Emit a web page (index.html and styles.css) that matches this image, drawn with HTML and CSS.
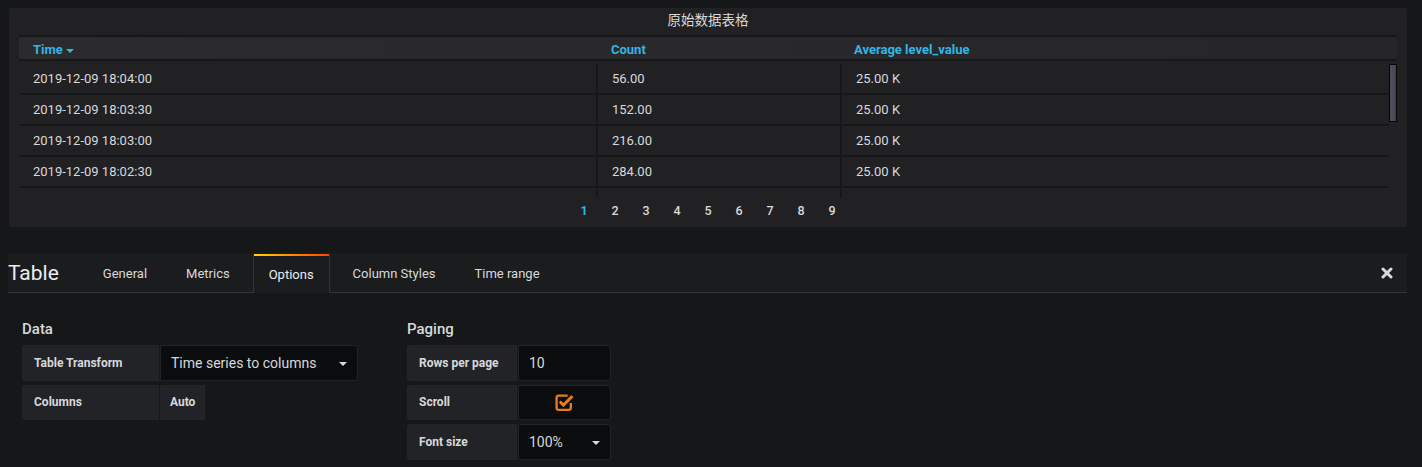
FILE: index.html
```html
<!DOCTYPE html>
<html lang="zh">
<head>
    <meta charset="UTF-8">
    <meta name="viewport" content="width=device-width, initial-scale=1.0">
    <title>Table - Options</title>
    <link rel="stylesheet" href="styles.css">
</head>
<body>

<!-- Bảng dữ liệu -->
<div class="panel">
    <div class="panel-title">原始数据表格</div>
    <table class="table-head">
        <colgroup>
            <col class="col-time-h">
            <col class="col-count-h">
            <col>
        </colgroup>
        <tr>
            <th>Time <span class="sort-caret"></span></th>
            <th>Count</th>
            <th>Average level_value</th>
        </tr>
    </table>
    <div class="table-scroll">
        <div class="rows">
            <table class="table-body">
                <colgroup>
                    <col class="col-time">
                    <col class="col-count">
                    <col>
                </colgroup>
                <tr><td>2019-12-09 18:04:00</td><td>56.00</td><td>25.00 K</td></tr>
                <tr><td>2019-12-09 18:03:30</td><td>152.00</td><td>25.00 K</td></tr>
                <tr><td>2019-12-09 18:03:00</td><td>216.00</td><td>25.00 K</td></tr>
                <tr><td>2019-12-09 18:02:30</td><td>284.00</td><td>25.00 K</td></tr>
                <tr class="filler"><td></td><td></td><td></td></tr>
            </table>
        </div>
        <div class="scrollbar"><div class="scrollbar-thumb"></div></div>
    </div>
    <ul class="pager">
        <li class="active">1</li>
        <li>2</li>
        <li>3</li>
        <li>4</li>
        <li>5</li>
        <li>6</li>
        <li>7</li>
        <li>8</li>
        <li>9</li>
    </ul>
</div>

<!-- Trình chỉnh sửa -->
<div class="editor">
    <div class="editor-tabs">
        <h3 class="editor-title">Table</h3>
        <ul class="tabs">
            <li class="tab">General</li>
            <li class="tab">Metrics</li>
            <li class="tab active">Options</li>
            <li class="tab">Column Styles</li>
            <li class="tab">Time range</li>
        </ul>
        <span class="close-btn">
            <svg width="12" height="12" viewBox="0 0 12 12">
                <path d="M2 2 L10 10 M10 2 L2 10" stroke="#d8d9da" stroke-width="3" stroke-linecap="round"/>
            </svg>
        </span>
    </div>

    <div class="editor-body">
        <div class="section">
            <h5 class="section-heading">Data</h5>
            <div class="form-row">
                <label class="form-label w-data">Table Transform</label>
                <div class="form-select w-transform">Time series to columns<span class="caret"></span></div>
            </div>
            <div class="form-row">
                <label class="form-label w-data">Columns</label>
                <div class="form-label form-value">Auto</div>
            </div>
        </div>

        <div class="section">
            <h5 class="section-heading">Paging</h5>
            <div class="form-row">
                <label class="form-label w-paging">Rows per page</label>
                <div class="form-input w-paging-input">10</div>
            </div>
            <div class="form-row">
                <label class="form-label w-paging">Scroll</label>
                <div class="form-input form-check w-paging-input">
                    <svg width="19" height="19" viewBox="0 0 18 18">
                        <path d="M12 2.5 H3.5 Q1.5 2.5 1.5 4.5 V14 Q1.5 16 3.5 16 H13 Q15 16 15 14 V9.5" fill="none" stroke="#eb7b18" stroke-width="2.2"/>
                        <path d="M4.5 8 L8 11.5 L16.5 3" fill="none" stroke="#eb7b18" stroke-width="2.8"/>
                    </svg>
                </div>
            </div>
            <div class="form-row">
                <label class="form-label w-paging">Font size</label>
                <div class="form-select w-paging-input">100%<span class="caret"></span></div>
            </div>
        </div>
    </div>
</div>

</body>
</html>
```

FILE: styles.css
```css
body {
    font-family: Roboto, "Noto Sans", "Noto Sans CJK SC", sans-serif;
    background-color: #161719;
    color: #d8d9da;
    margin: 0;
    padding: 0;
}
ul {
    list-style: none;
    margin: 0;
    padding: 0;
}

/* panel */
.panel {
    margin: 8px 15px 0 9px;
    height: 219px;
    background: #212124;
    border-radius: 2px;
}
.panel-title {
    height: 27px;
    line-height: 24px;
    text-align: center;
    font-size: 13.5px;
    font-family: Roboto, "Noto Sans CJK SC", sans-serif;
}
.table-head {
    margin: 0 10px;
    width: calc(100% - 20px);
    border-collapse: separate;
    border-spacing: 0;
    table-layout: fixed;
    background: linear-gradient(90deg, #2b2b2e, #262629);
}
.col-time-h { width: 578px; }
.col-count-h { width: 243px; }
.table-head th {
    line-height: 18px;
    padding: 4px 0 0 14px;
    border-top: 2px solid #161719;
    border-bottom: 2px solid #161719;
    text-align: left;
    font-size: 13px;
    font-weight: 700;
    color: #33b5e5;
}
.sort-caret {
    display: inline-block;
    vertical-align: middle;
    margin-left: 0;
    border-left: 4px solid transparent;
    border-right: 4px solid transparent;
    border-top: 4px solid #33b5e5;
}
.table-scroll {
    display: flex;
    margin: 3px 10px 0;
    height: 134px;
}
.rows {
    flex: 1;
}
.table-body {
    width: 100%;
    border-collapse: separate;
    border-spacing: 0;
    table-layout: fixed;
}
.col-time { width: 579px; }
.col-count { width: 244px; }
.table-body td {
    padding: 1px 0 0 14px;
    line-height: 28px;
    font-size: 13px;
    border-bottom: 2px solid #161719;
}
.table-body td:nth-child(1),
.table-body td:nth-child(2) {
    border-right: 2px solid #161719;
}
.table-body .filler td {
    padding: 0;
    line-height: 10px;
    height: 10px;
    border-bottom: none;
}
.scrollbar {
    width: 8px;
}
.scrollbar-thumb {
    height: 58px;
    box-sizing: border-box;
    border: 1px solid #050505;
    background: linear-gradient(90deg, #51525f, #434451);
}
.pager {
    display: flex;
    justify-content: center;
    height: 29px;
}
.pager li {
    width: 31px;
    line-height: 25px;
    text-align: center;
    font-size: 12.5px;
    font-weight: 500;
}
.pager li.active {
    color: #33b5e5;
    font-weight: 700;
}

/* editor */
.editor {
    margin: 26px 15px 0 8px;
}
.editor-tabs {
    display: flex;
    align-items: flex-end;
    height: 39px;
    background: #1b1c1e;
    border-bottom: 1px solid #333437;
}
.editor-title {
    align-self: center;
    margin: 1px 28px 0 0;
    font-size: 21px;
    font-weight: 400;
    color: #e9edf2;
}
.tabs {
    display: flex;
    align-items: flex-end;
}
.tab {
    height: 38px;
    line-height: 40px;
    padding: 0 15px;
    margin-right: 7px;
    border: 1px solid transparent;
    border-bottom: none;
    font-size: 13px;
}
.tab.active {
    height: 38px;
    margin-bottom: -1px;
    border-color: #333437;
    border-top: none;
    padding-top: 1px;
    background: linear-gradient(90deg, #ffd500, #ff4400) top / 100% 2px no-repeat, #1b1c1e;
    color: #e9edf2;
}
.close-btn {
    display: flex;
    align-self: center;
    margin-left: auto;
    margin-right: 14px;
}
.editor-body {
    display: flex;
    gap: 49px;
    padding: 26px 0 0 14px;
}
.section-heading {
    margin: 0 0 6px;
    font-size: 15px;
    font-weight: 500;
    line-height: 20px;
}
.form-row {
    display: flex;
    height: 35.5px;
    margin-bottom: 4px;
}
.form-label {
    display: flex;
    align-items: center;
    box-sizing: border-box;
    margin-right: 1px;
    padding: 0 11px;
    background: #222327;
    border: 1px solid #242529;
    border-radius: 3px 0 0 3px;
    font-size: 12px;
    font-weight: 700;
}
.form-value {
    padding: 0 9px;
    border-radius: 0;
}
.w-data { width: 137px; }
.w-paging { width: 110px; }
.form-select,
.form-input {
    display: flex;
    align-items: center;
    justify-content: space-between;
    box-sizing: border-box;
    padding: 0 10px;
    background: #0b0c0e;
    border: 1px solid #222327;
    border-radius: 0 3px 3px 0;
    font-size: 14px;
}
.w-transform { width: 198px; }
.w-paging-input { width: 93px; }
.form-check {
    justify-content: center;
}
.caret {
    border-left: 4px solid transparent;
    border-right: 4px solid transparent;
    border-top: 4px solid #d8d9da;
    margin-top: 2px;
}
```
